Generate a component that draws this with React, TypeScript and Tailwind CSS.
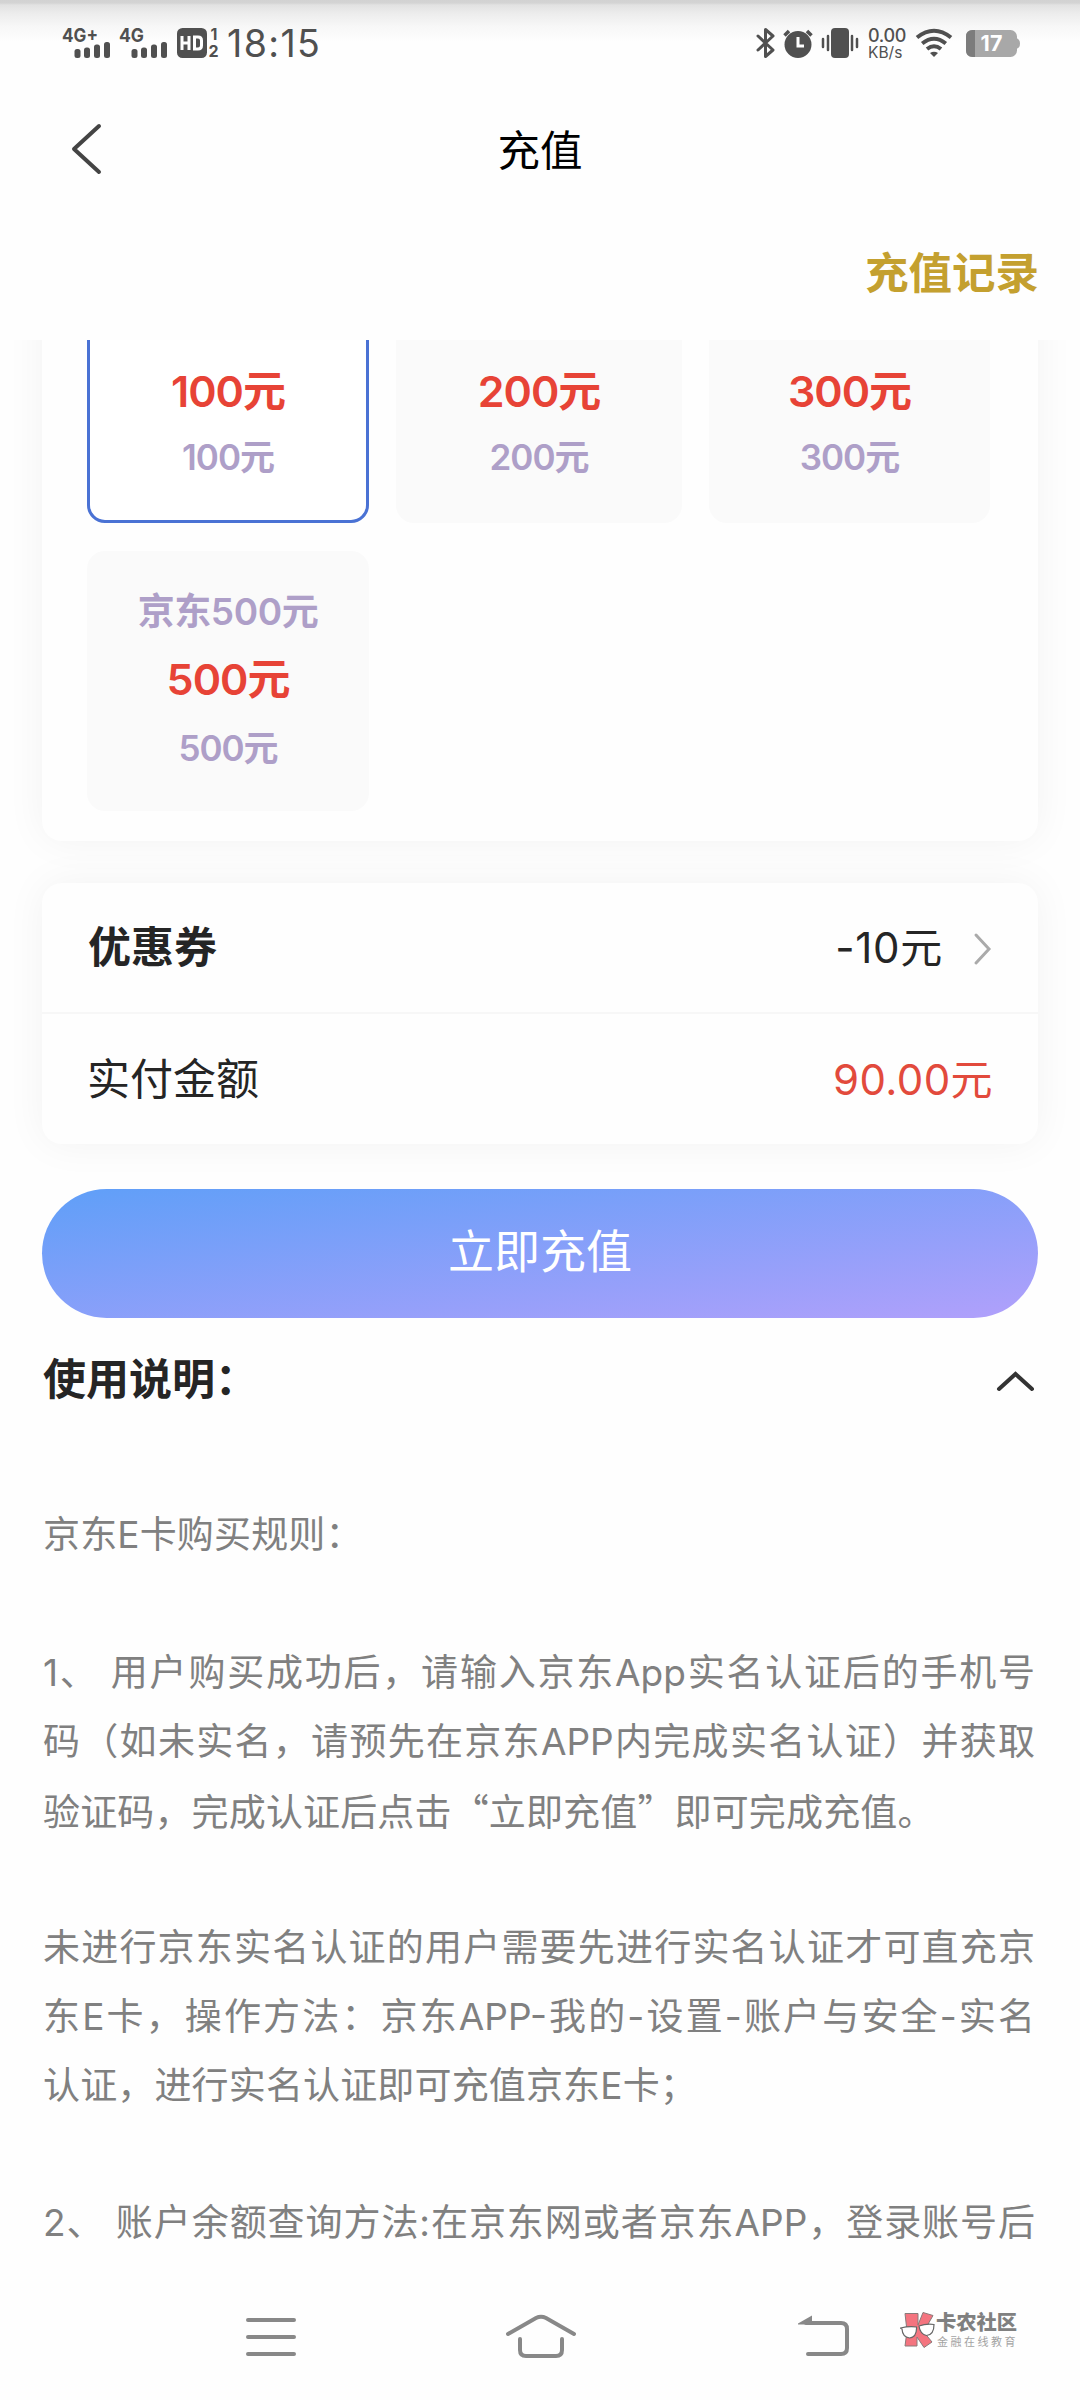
import React from "react";

const font = "font-['Inter','Noto_Sans_CJK_SC',sans-serif]";

const cards = [
    { title: "", price: "100元", value: "100元", active: true },
    { title: "", price: "200元", value: "200元", active: false },
    { title: "", price: "300元", value: "300元", active: false },
    { title: "京东500元", price: "500元", value: "500元", active: false },
];

// full: the line is stretched to both edges
const rules = [
    { text: "京东E卡购买规则：", full: false },
    { text: "", full: false },
    { text: "1、 用户购买成功后，请输入京东App实名认证后的手机号", full: true },
    { text: "码（如未实名，请预先在京东APP内完成实名认证）并获取", full: true },
    { text: "验证码，完成认证后点击“立即充值”即可完成充值。", full: false },
    { text: "", full: false },
    { text: "未进行京东实名认证的用户需要先进行实名认证才可直充京", full: true },
    { text: "东E卡，操作方法：京东APP-我的-设置-账户与安全-实名", full: true },
    { text: "认证，进行实名认证即可充值京东E卡；", full: false },
    { text: "", full: false },
    { text: "2、 账户余额查询方法:在京东网或者京东APP，登录账号后", full: true },
];

const Signal = ({ label }: { label: string }) => (
    <svg className="h-[34px] w-[50px]" viewBox="0 0 50 34" fill="#505050">
        <text x="0" y="16.5" fontSize="19" fontWeight="700" fontFamily="Inter" textLength={label.length > 2 ? 36 : 25} lengthAdjust="spacingAndGlyphs">{label}</text>
        <rect x="12.500" y="24" width="6" height="9" rx="2.500" />
        <rect x="22" y="22.500" width="6" height="10.500" rx="2.500" />
        <rect x="32" y="19.500" width="6" height="13.500" rx="2.500" />
        <rect x="42" y="17" width="6" height="16" rx="2.500" />
    </svg>
);

const StatusBar = () => (
    <div className="flex h-[90px] shrink-0 items-start bg-[linear-gradient(180deg,#d2d2d2_0px,#d4d4d4_3px,#e2e2e2_5px,#ededed_14px,#f7f7f7_26px,#fefefe_42px)] pl-[62px] pr-[60px] pt-[25px] text-[#505050]">
        <Signal label="4G+" />
        <div className="w-[7px]" />
        <Signal label="4G" />
        <svg className="ml-[8px] h-[34px] w-[44px]" viewBox="0 0 44 34">
            <rect x="0" y="3" width="30" height="30" rx="5.500" fill="#505050" />
            <path d="M5 11V25M12 11V25M5 18H12M17.500 12H21Q24.500 12 24.500 15.500V20.500Q24.500 24 21 24H17.500Z" fill="none" stroke="#fff" strokeWidth="3" />
            <text x="33.500" y="15" fontSize="16" fontWeight="700" fontFamily="Inter" fill="#505050">1</text>
            <text x="31.500" y="32" fontSize="16" fontWeight="700" fontFamily="Inter" fill="#505050">2</text>
        </svg>
        <span className="ml-[6px] mt-[-1px] text-[37.500px] leading-[40px] tracking-[1.400px]">18:15</span>
        <div className="grow" />
        <svg className="h-[34px] w-[22px]" viewBox="0 0 22 34" fill="none" stroke="#505050" strokeWidth="3" strokeLinejoin="round" strokeLinecap="round">
            <path d="M3 11L18 25L10.500 31.500V4.500L18 11L3 25" />
        </svg>
        <svg className="ml-[5px] h-[34px] w-[32px]" viewBox="0 0 32 34">
            <circle cx="16" cy="19.500" r="13.500" fill="#505050" />
            <path d="M2.500 10.500L7 6M29.500 10.500L25 6" stroke="#505050" strokeWidth="3.500" />
            <path d="M16 12V21H22" fill="none" stroke="#fff" strokeWidth="3" />
        </svg>
        <svg className="ml-[7px] h-[34px] w-[38px]" viewBox="0 0 38 34">
            <rect x="10" y="3" width="18" height="30" rx="4" fill="#505050" />
            <path d="M2 14V22M7 11V25M31 11V25M36 14V22" stroke="#505050" strokeWidth="2.500" strokeLinecap="round" />
        </svg>
        <div className="ml-[9px] mt-[2px] flex w-[40px] flex-col items-start">
            <span className="text-[18px] font-medium leading-[18px] tracking-[-0.300px]">0.00</span>
            <span className="whitespace-nowrap text-[15.500px] leading-[15px]">KB/s</span>
        </div>
        <svg className="ml-[7px] h-[34px] w-[38px]" viewBox="0 0 38 34" fill="none" stroke="#505050" strokeWidth="4">
            <path d="M2 12.500Q19 -1 36 12.500M7.200 18.500Q19 9 30.800 18.500M12 24Q19 18.500 26 24" />
            <path d="M19 32L15 28Q19 25.500 23 28Z" fill="#505050" stroke="none" />
        </svg>
        <svg className="ml-[13px] h-[34px] w-[54px]" viewBox="0 0 54 34">
            <rect x="0" y="5" width="51" height="27" rx="6.500" fill="#a8a8a8" />
            <path d="M50 13Q54 14 54 18.500Q54 23 50 24Z" fill="#a8a8a8" />
            <path d="M9 5H6.500Q0 5 0 11.500V25.500Q0 32 6.500 32H9Z" fill="#7c7c7c" />
            <text x="25.500" y="26" fontSize="21.500" fontWeight="700" fontFamily="Inter" fill="#fff" textAnchor="middle">17</text>
        </svg>
    </div>
);

const Header = () => (
    <div className="flex h-[120px] shrink-0 items-center justify-between px-[68px]">
        <svg className="-mt-[3px] h-[56px] w-[40px]" viewBox="0 0 40 56" fill="none" stroke="#444" strokeWidth="4" strokeLinecap="round" strokeLinejoin="round">
            <path d="M31 5L6 28L31 51" />
        </svg>
        <h1 className="mt-[2px] text-[42.500px] leading-[60px] text-black">充值</h1>
        <div className="w-[40px]" />
    </div>
);

const NavBar = () => (
    <div className="flex h-[140px] shrink-0 bg-[#fefefe] pl-[244px] pt-[46px]">
        <svg className="h-[60px] w-[54px]" viewBox="0 0 54 60" stroke="#888" strokeWidth="4" strokeLinecap="round">
            <path d="M4 14H50M4 31H50M4 48H50" />
        </svg>
        <svg className="ml-[206px] h-[60px] w-[74px]" viewBox="0 0 74 60" fill="none" stroke="#888" strokeWidth="4" strokeLinecap="round">
            <path d="M4 28L32 12Q37 9.500 42 12L70 28M16 33V44Q16 50 22 50H52Q58 50 58 44V33" />
        </svg>
        <svg className="ml-[218px] h-[60px] w-[58px]" viewBox="0 0 58 60" fill="none" stroke="#888" strokeWidth="4" strokeLinecap="round">
            <path d="M10 17H45Q51 17 51 23V42Q51 48 45 48H12" />
            <path d="M2 17.500L16 9.500V18.500H2Z" fill="#888" stroke="none" />
        </svg>
        <div className="ml-[46px] mt-[5px] flex">
            <svg className="h-[38px] w-[36px]" viewBox="0 0 36 38">
                <path d="M5 2.500H18V14L23 1.500L33 4.500L27 15L23 20L32 31L24 36.500L17 26V35H5L7 20Z" fill="#f4747f" stroke="#8a7a7a" strokeWidth="1" />
                <path d="M0.500 17Q9 15 16.500 16Q17 26 9.500 27Q2.500 26 2 18Z" fill="#fff" stroke="#666" strokeWidth="1.200" />
                <path d="M19 15Q26 12.500 34 13.500Q34 24 26.500 24.500Q20 23 19 15Z" fill="#fff" stroke="#666" strokeWidth="1.200" />
            </svg>
            <div className="flex flex-col text-[#808080]">
                <span className="text-[20.300px] font-black leading-[24px]">卡农社区</span>
                <span className="ml-[1px] text-[11px] leading-[14px] tracking-[2.500px] text-[#a3a3a3]">金融在线教育</span>
            </div>
        </div>
    </div>
);

const App = () => {
    return (
        <div className={`flex h-[2400px] w-[1080px] flex-col overflow-hidden bg-[#fefefe] ${font}`}>
            <StatusBar />
            <Header />
            <div className="flex h-[130px] shrink-0 justify-end pr-[41px] pt-[33px]">
                <span className="text-[43.500px] font-bold leading-[60px] text-[#c4a02f]">充值记录</span>
            </div>

            <div className="flex grow flex-col overflow-hidden px-[42px]">
                <div className="-mt-[140px] h-[641px] shrink-0 rounded-[20px] bg-[#fefefe] px-[45px] pt-[63px] shadow-[0_0_40px_rgba(0,0,0,0.05)]">
                    <div className="grid grid-cols-[282px_286px_281px] gap-x-[27px] gap-y-[28px]">
                        {cards.map((card) => (
                            <div
                                key={card.price}
                                className={`flex h-[260px] flex-col items-center rounded-[18px] text-[#ae9fc8] ${card.active ? "border-[3px] border-[#4a72d4] bg-white pt-[30px]" : "bg-[#fafafa] pt-[33px]"}`}
                            >
                                <span className="h-[56px] text-[37px] font-semibold leading-[56px] tracking-[-0.400px]">{card.title}</span>
                                <span className="mt-[9px] text-[43px] font-semibold leading-[60px] tracking-[-1px] text-[#e74336]">{card.price}</span>
                                <span className={`text-[35px] font-semibold leading-[52px] tracking-[-1px] ${card.title ? "mt-[13px]" : "mt-[10px]"}`}>{card.value}</span>
                            </div>
                        ))}
                    </div>
                </div>

                <div className="mt-[42px] flex h-[261px] shrink-0 flex-col rounded-[20px] bg-[#fefefe] text-[#252525] shadow-[0_0_40px_rgba(0,0,0,0.05)]">
                    <div className="flex h-[131px] shrink-0 items-center justify-between border-b-2 border-[#f7f7f7] px-[46px]">
                        <span className="text-[43px] font-bold">优惠券</span>
                        <div className="flex items-center">
                            <span className="text-[42px] tracking-[0.700px]">-10元</span>
                            <svg className="ml-[29px] h-[36px] w-[20px]" viewBox="0 0 20 36" fill="none" stroke="#aaa" strokeWidth="3" strokeLinecap="round">
                                <path d="M4 5L17 19L4 33" />
                            </svg>
                        </div>
                    </div>
                    <div className="flex h-[130px] items-center justify-between px-[45px]">
                        <span className="text-[43px]">实付金额</span>
                        <span className="text-[42px] tracking-[0.400px] text-[#e24a3c]">90.00元</span>
                    </div>
                </div>

                <button className="mt-[45px] h-[129px] shrink-0 rounded-full bg-[linear-gradient(to_bottom_right,#5f9ff8,#b1a0fb)] pb-[4px] text-[46px] text-white">
                    立即充值
                </button>

                <div className="mt-[31px] flex h-[60px] shrink-0 items-center justify-between pl-[1px]">
                    <h2 className="text-[43px] font-bold text-[#252525]">使用说明：</h2>
                    <svg className="mt-[6px] h-[28px] w-[44px]" viewBox="0 0 44 28" fill="none" stroke="#333" strokeWidth="4" strokeLinecap="round">
                        <path d="M5 21L21.500 6L38 21" />
                    </svg>
                </div>

                <div className="mt-[92px] pl-px pr-[3px] text-[37px] leading-[68.850px] text-[#808080]">
                    {rules.map((line, i) => (
                        <p
                            key={i}
                            className={`h-[68.850px] whitespace-nowrap ${line.full ? "text-justify [text-align-last:justify]" : "tracking-[0.150px]"} ${line.text.includes("“") ? "font-['Noto_Sans_CJK_SC',sans-serif]" : ""}`}
                        >
                            {line.text}
                        </p>
                    ))}
                </div>
            </div>

            <NavBar />
        </div>
    );
};

export default App;
